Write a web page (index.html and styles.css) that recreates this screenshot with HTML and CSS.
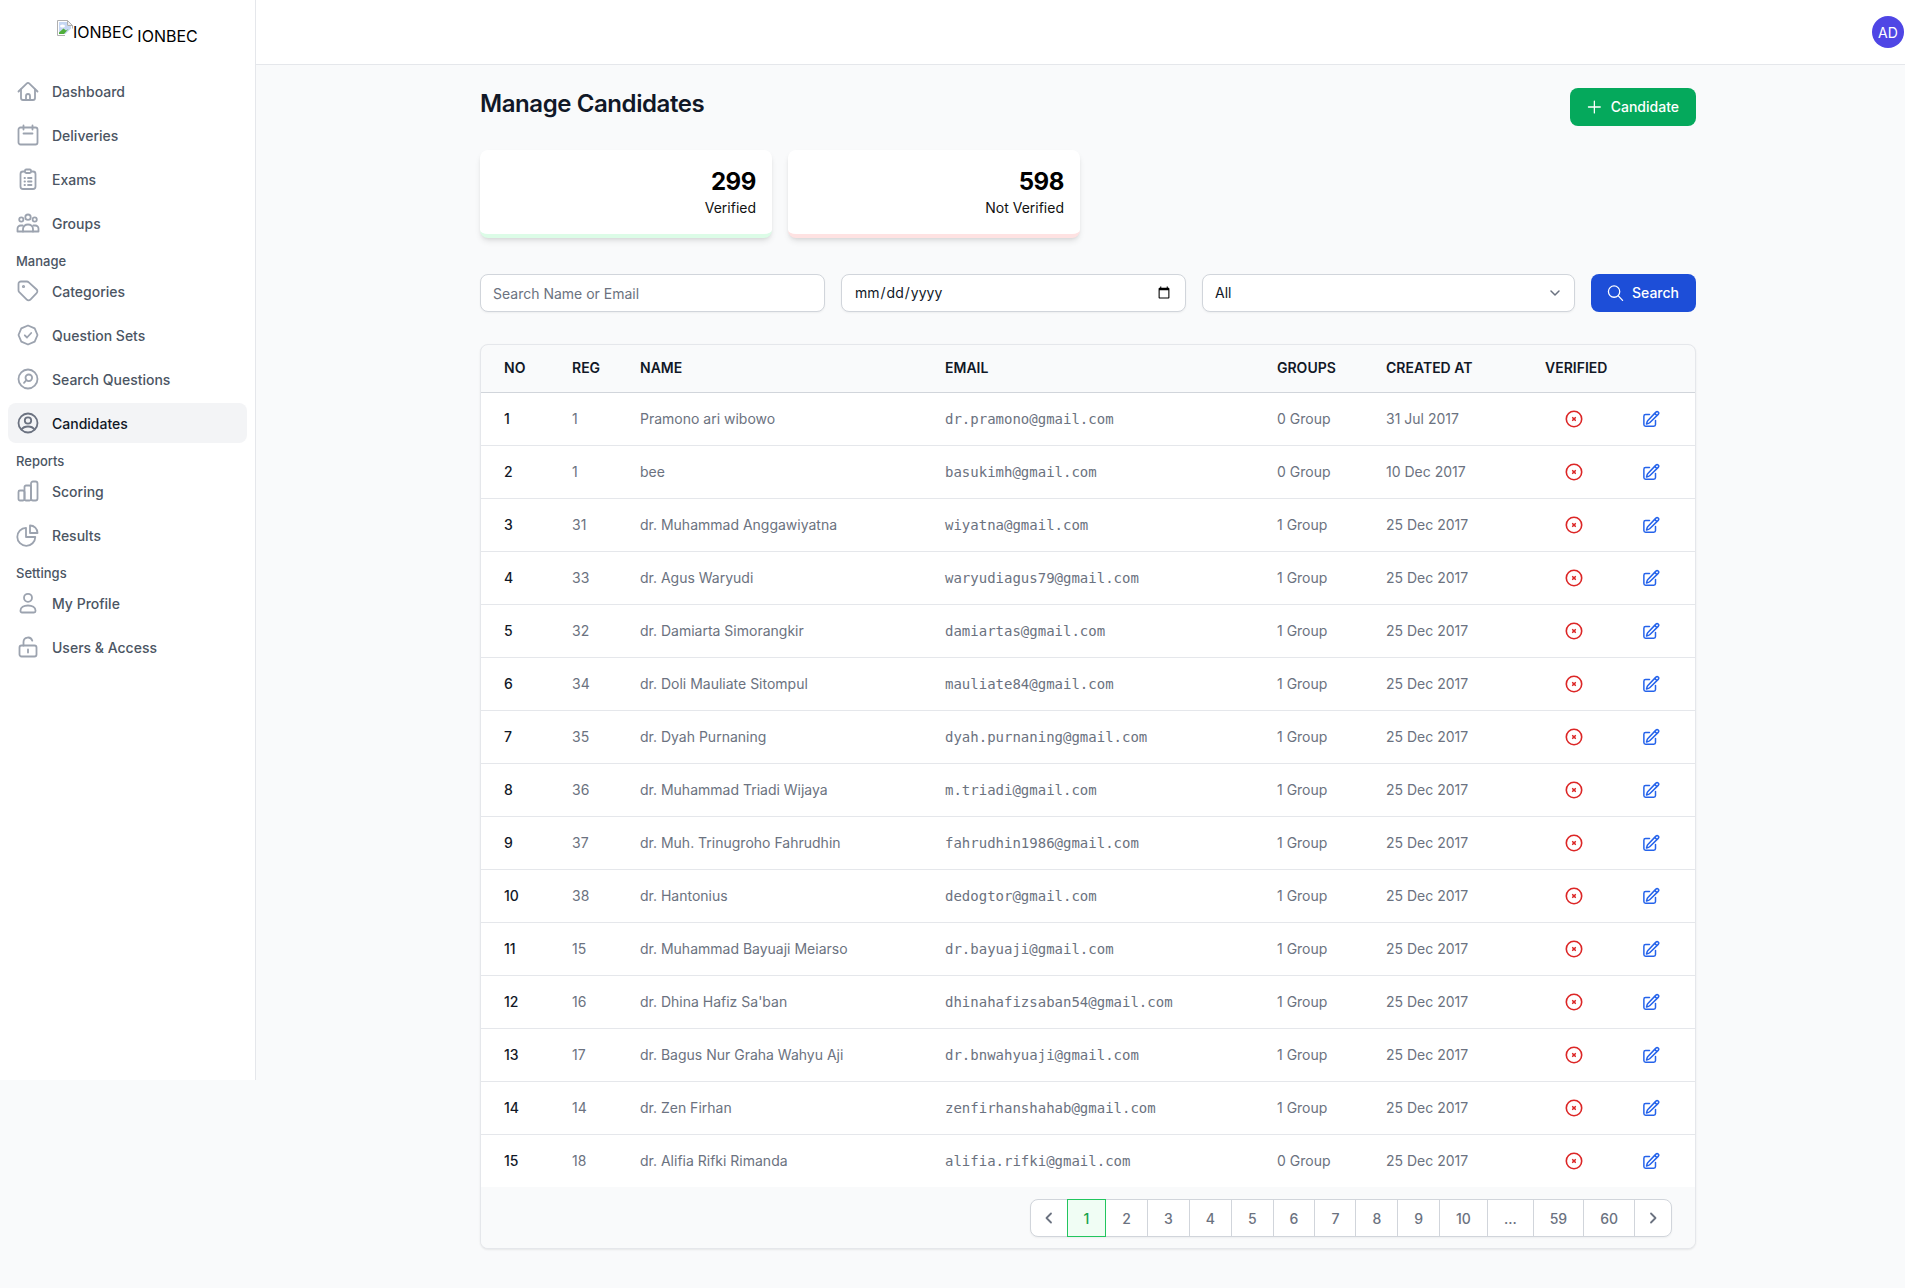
FILE: index.html
```html
<!DOCTYPE html>
<html lang="en">
<head>
<meta charset="utf-8">
<title>Manage Candidates</title>
<link rel="stylesheet" href="styles.css">
</head>
<body>
<div class="shell">
<aside class="sidebar">
  <div class="logo">
    <span class="logo-img">
      <svg class="broken" viewBox="0 0 16 16" width="16" height="16"><path d="M2 2h8v4h4v2.500L8.500 14H2z" fill="#c6d7f3"/><ellipse cx="5.500" cy="6" rx="2.500" ry="1.500" fill="#fff"/><path d="M2 14v-1.500l4.500-4 2.500 2 2.500-1.500L7 14z" fill="#4fae3a"/><path d="M8 15.500H.5V.5h10l5 5v3" fill="none" stroke="#b0b0b0"/><path d="M10.500.5v5h5z" fill="#eee" stroke="#b0b0b0"/></svg>
      <span class="logo-alt">IONBEC</span>
    </span>
    <span class="logo-text">IONBEC</span>
  </div>
  <nav class="nav">
    <a class="nav-item"><svg class="nav-icon" viewBox="0 0 24 24"><path d="M2.500 12.500 10.600 4.600a2 2 0 0 1 2.800 0l8.100 7.900"/><path d="M5 10.500V19a2 2 0 0 0 2 2h10a2 2 0 0 0 2-2v-8.500"/><path d="M10 21v-4a2 2 0 0 1 4 0v4"/></svg>Dashboard</a>
    <a class="nav-item"><svg class="nav-icon" viewBox="0 0 24 24"><rect x="2.500" y="4.500" width="19" height="17" rx="2"/><path d="M7.500 2.500v4M16.500 2.500v4M7.500 10.500h9"/></svg>Deliveries</a>
    <a class="nav-item"><svg class="nav-icon" viewBox="0 0 24 24"><rect x="4.500" y="4.500" width="15" height="17.500" rx="2.500"/><rect x="9" y="2.500" width="6" height="3.500" rx="1.200" fill="#fff"/><path d="M8.500 11h.5M12 11h3.500M8.500 14.500h.5M12 14.500h3.500M8.500 18h.5M12 18h3.500"/></svg>Exams</a>
    <a class="nav-item"><svg class="nav-icon" viewBox="0 0 24 24"><circle cx="12" cy="6.200" r="2.700"/><circle cx="5.300" cy="8.500" r="2.100"/><circle cx="18.700" cy="8.500" r="2.100"/><path d="M7 20.500v-2.500c0-2.700 2.200-4.500 5-4.500s5 1.800 5 4.500v2.500"/><path d="M1.500 20.500v-2.800a3.200 3.200 0 0 1 3.200-3.200h2M22.500 20.500v-2.800a3.200 3.200 0 0 0-3.200-3.200h-2M1.500 20.500h21"/></svg>Groups</a>
    <div class="nav-label">Manage</div>
    <a class="nav-item"><svg class="nav-icon" viewBox="0 0 24 24"><path d="M2.500 5a2.500 2.500 0 0 1 2.500-2.500h5.800a3 3 0 0 1 2 .8l7.800 7.200a2.500 2.500 0 0 1 0 3.600l-6.200 6.600a2.500 2.500 0 0 1-3.600 0l-7.500-7.500a3 3 0 0 1-.8-2z"/><circle cx="7.500" cy="7.500" r=".7"/></svg>Categories</a>
    <a class="nav-item"><svg class="nav-icon" viewBox="0 0 24 24"><path d="M12 2.500l6.700 2.800 2.800 6.700-2.800 6.700-6.700 2.800-6.700-2.800L2.500 12l2.800-6.700z"/><path d="M8.800 12.300l2.200 2.200 4.200-4.500"/></svg>Question Sets</a>
    <a class="nav-item"><svg class="nav-icon" viewBox="0 0 24 24"><circle cx="12" cy="12" r="9.500"/><circle cx="12.800" cy="10.800" r="3.300"/><path d="M10.400 13.200 8 15.800"/></svg>Search Questions</a>
    <a class="nav-item active"><svg class="nav-icon" viewBox="0 0 24 24"><circle cx="12" cy="12" r="9.500"/><circle cx="12" cy="9.500" r="3.200"/><path d="M5.500 18.500c1.300-2 3.700-3 6.500-3s5.200 1 6.500 3"/></svg>Candidates</a>
    <div class="nav-label">Reports</div>
    <a class="nav-item"><svg class="nav-icon" viewBox="0 0 24 24"><rect x="2.500" y="11.500" width="6" height="10" rx="1.500"/><rect x="8.500" y="6.500" width="6.500" height="15" rx="1.500"/><rect x="15" y="2.500" width="6.500" height="19" rx="2"/></svg>Scoring</a>
    <a class="nav-item"><svg class="nav-icon" viewBox="0 0 24 24"><path d="M10 4.800a9 9 0 1 0 9.300 9.200H10z"/><path d="M14 2.500a7.500 7.500 0 0 1 7.500 7.500H14z"/></svg>Results</a>
    <div class="nav-label">Settings</div>
    <a class="nav-item"><svg class="nav-icon" viewBox="0 0 24 24"><circle cx="12" cy="6.800" r="4"/><path d="M4.500 19.500c0-3 3.300-5 7.500-5s7.500 2 7.500 5v.5a1.500 1.500 0 0 1-1.500 1.500H6A1.500 1.500 0 0 1 4.500 20z"/></svg>My Profile</a>
    <a class="nav-item"><svg class="nav-icon" viewBox="0 0 24 24"><rect x="3.500" y="10.500" width="17" height="11" rx="2"/><path d="M7.500 10.500V7a4.500 4.500 0 0 1 8.800-1.300M12 14.500v3"/></svg>Users &amp; Access</a>
  </nav>
</aside>
<div class="main">
  <header class="topbar"><span class="avatar">AD</span></header>
  <main class="content">
    <div class="page-head">
      <h1 class="title">Manage Candidates</h1>
      <button class="btn btn-green"><svg class="btn-icon" viewBox="0 0 24 24"><path d="M12 3.500v17M3.500 12h17"/></svg>Candidate</button>
    </div>
    <div class="stats">
      <div class="stat stat-green"><div class="stat-num">299</div><div class="stat-label">Verified</div></div>
      <div class="stat stat-red"><div class="stat-num">598</div><div class="stat-label">Not Verified</div></div>
    </div>
    <form class="filters">
      <input class="field" type="text" placeholder="Search Name or Email">
      <input class="field" type="date">
      <select class="field select"><option>All</option></select>
      <button class="btn btn-blue" type="button"><svg class="btn-icon" viewBox="0 0 24 24"><circle cx="10" cy="10" r="8"/><path d="M16 16l6 6.500"/></svg>Search</button>
    </form>
    <div class="table-card">
      <table class="table">
        <colgroup><col class="c-no"><col class="c-reg"><col class="c-name"><col class="c-email"><col class="c-groups"><col class="c-created"><col class="c-verified"><col></colgroup>
        <thead><tr><th>No</th><th>Reg</th><th>Name</th><th>Email</th><th>Groups</th><th>Created At</th><th>Verified</th><th></th></tr></thead>
        <tbody>
          <tr><td class="num">1</td><td>1</td><td>Pramono ari wibowo</td><td class="mono">dr.pramono@gmail.com</td><td>0 Group</td><td>31 Jul 2017</td><td class="status"><svg class="x-icon" viewBox="0 0 20 20"><circle cx="10" cy="10" r="7.700"/><path d="M8.700 8.700l2.600 2.600M11.300 8.700l-2.600 2.600"/></svg></td><td class="action"><svg class="edit-icon" viewBox="0 0 24 24"><path d="M16.900 4.500l1.700-1.700a2.100 2.100 0 0 1 3 3L10.600 16.700a4.500 4.500 0 0 1-1.900 1.100L6 18.600l.8-2.700a4.500 4.500 0 0 1 1.100-1.900L16.900 4.500zM16.900 4.500l2.600 2.600M18 14v5.200a2.300 2.300 0 0 1-2.300 2.300H4.800a2.300 2.300 0 0 1-2.300-2.300V8.300A2.300 2.300 0 0 1 4.800 6H10"/></svg></td></tr>
          <tr><td class="num">2</td><td>1</td><td>bee</td><td class="mono">basukimh@gmail.com</td><td>0 Group</td><td>10 Dec 2017</td><td class="status"><svg class="x-icon" viewBox="0 0 20 20"><circle cx="10" cy="10" r="7.700"/><path d="M8.700 8.700l2.600 2.600M11.300 8.700l-2.600 2.600"/></svg></td><td class="action"><svg class="edit-icon" viewBox="0 0 24 24"><path d="M16.900 4.500l1.700-1.700a2.100 2.100 0 0 1 3 3L10.600 16.700a4.500 4.500 0 0 1-1.900 1.100L6 18.600l.8-2.700a4.500 4.500 0 0 1 1.100-1.900L16.900 4.500zM16.900 4.500l2.600 2.600M18 14v5.200a2.300 2.300 0 0 1-2.300 2.300H4.800a2.300 2.300 0 0 1-2.300-2.300V8.300A2.300 2.300 0 0 1 4.800 6H10"/></svg></td></tr>
          <tr><td class="num">3</td><td>31</td><td>dr. Muhammad Anggawiyatna</td><td class="mono">wiyatna@gmail.com</td><td>1 Group</td><td>25 Dec 2017</td><td class="status"><svg class="x-icon" viewBox="0 0 20 20"><circle cx="10" cy="10" r="7.700"/><path d="M8.700 8.700l2.600 2.600M11.300 8.700l-2.600 2.600"/></svg></td><td class="action"><svg class="edit-icon" viewBox="0 0 24 24"><path d="M16.900 4.500l1.700-1.700a2.100 2.100 0 0 1 3 3L10.600 16.700a4.500 4.500 0 0 1-1.900 1.100L6 18.600l.8-2.700a4.500 4.500 0 0 1 1.100-1.900L16.900 4.500zM16.900 4.500l2.600 2.600M18 14v5.200a2.300 2.300 0 0 1-2.300 2.300H4.800a2.300 2.300 0 0 1-2.300-2.300V8.300A2.300 2.300 0 0 1 4.800 6H10"/></svg></td></tr>
          <tr><td class="num">4</td><td>33</td><td>dr. Agus Waryudi</td><td class="mono">waryudiagus79@gmail.com</td><td>1 Group</td><td>25 Dec 2017</td><td class="status"><svg class="x-icon" viewBox="0 0 20 20"><circle cx="10" cy="10" r="7.700"/><path d="M8.700 8.700l2.600 2.600M11.300 8.700l-2.600 2.600"/></svg></td><td class="action"><svg class="edit-icon" viewBox="0 0 24 24"><path d="M16.900 4.500l1.700-1.700a2.100 2.100 0 0 1 3 3L10.600 16.700a4.500 4.500 0 0 1-1.900 1.100L6 18.600l.8-2.700a4.500 4.500 0 0 1 1.100-1.900L16.900 4.500zM16.900 4.500l2.600 2.600M18 14v5.200a2.300 2.300 0 0 1-2.300 2.300H4.800a2.300 2.300 0 0 1-2.300-2.300V8.300A2.300 2.300 0 0 1 4.800 6H10"/></svg></td></tr>
          <tr><td class="num">5</td><td>32</td><td>dr. Damiarta Simorangkir</td><td class="mono">damiartas@gmail.com</td><td>1 Group</td><td>25 Dec 2017</td><td class="status"><svg class="x-icon" viewBox="0 0 20 20"><circle cx="10" cy="10" r="7.700"/><path d="M8.700 8.700l2.600 2.600M11.300 8.700l-2.600 2.600"/></svg></td><td class="action"><svg class="edit-icon" viewBox="0 0 24 24"><path d="M16.900 4.500l1.700-1.700a2.100 2.100 0 0 1 3 3L10.600 16.700a4.500 4.500 0 0 1-1.900 1.100L6 18.600l.8-2.700a4.500 4.500 0 0 1 1.100-1.900L16.900 4.500zM16.900 4.500l2.600 2.600M18 14v5.200a2.300 2.300 0 0 1-2.300 2.300H4.800a2.300 2.300 0 0 1-2.300-2.300V8.300A2.300 2.300 0 0 1 4.800 6H10"/></svg></td></tr>
          <tr><td class="num">6</td><td>34</td><td>dr. Doli Mauliate Sitompul</td><td class="mono">mauliate84@gmail.com</td><td>1 Group</td><td>25 Dec 2017</td><td class="status"><svg class="x-icon" viewBox="0 0 20 20"><circle cx="10" cy="10" r="7.700"/><path d="M8.700 8.700l2.600 2.600M11.300 8.700l-2.600 2.600"/></svg></td><td class="action"><svg class="edit-icon" viewBox="0 0 24 24"><path d="M16.900 4.500l1.700-1.700a2.100 2.100 0 0 1 3 3L10.600 16.700a4.500 4.500 0 0 1-1.900 1.100L6 18.600l.8-2.700a4.500 4.500 0 0 1 1.100-1.900L16.900 4.500zM16.900 4.500l2.600 2.600M18 14v5.200a2.300 2.300 0 0 1-2.300 2.300H4.800a2.300 2.300 0 0 1-2.300-2.300V8.300A2.300 2.300 0 0 1 4.800 6H10"/></svg></td></tr>
          <tr><td class="num">7</td><td>35</td><td>dr. Dyah Purnaning</td><td class="mono">dyah.purnaning@gmail.com</td><td>1 Group</td><td>25 Dec 2017</td><td class="status"><svg class="x-icon" viewBox="0 0 20 20"><circle cx="10" cy="10" r="7.700"/><path d="M8.700 8.700l2.600 2.600M11.300 8.700l-2.600 2.600"/></svg></td><td class="action"><svg class="edit-icon" viewBox="0 0 24 24"><path d="M16.900 4.500l1.700-1.700a2.100 2.100 0 0 1 3 3L10.600 16.700a4.500 4.500 0 0 1-1.900 1.100L6 18.600l.8-2.700a4.500 4.500 0 0 1 1.100-1.900L16.900 4.500zM16.900 4.500l2.600 2.600M18 14v5.200a2.300 2.300 0 0 1-2.300 2.300H4.800a2.300 2.300 0 0 1-2.300-2.300V8.300A2.300 2.300 0 0 1 4.800 6H10"/></svg></td></tr>
          <tr><td class="num">8</td><td>36</td><td>dr. Muhammad Triadi Wijaya</td><td class="mono">m.triadi@gmail.com</td><td>1 Group</td><td>25 Dec 2017</td><td class="status"><svg class="x-icon" viewBox="0 0 20 20"><circle cx="10" cy="10" r="7.700"/><path d="M8.700 8.700l2.600 2.600M11.300 8.700l-2.600 2.600"/></svg></td><td class="action"><svg class="edit-icon" viewBox="0 0 24 24"><path d="M16.900 4.500l1.700-1.700a2.100 2.100 0 0 1 3 3L10.600 16.700a4.500 4.500 0 0 1-1.900 1.100L6 18.600l.8-2.700a4.500 4.500 0 0 1 1.100-1.900L16.900 4.500zM16.900 4.500l2.600 2.600M18 14v5.200a2.300 2.300 0 0 1-2.300 2.300H4.800a2.300 2.300 0 0 1-2.300-2.300V8.300A2.300 2.300 0 0 1 4.800 6H10"/></svg></td></tr>
          <tr><td class="num">9</td><td>37</td><td>dr. Muh. Trinugroho Fahrudhin</td><td class="mono">fahrudhin1986@gmail.com</td><td>1 Group</td><td>25 Dec 2017</td><td class="status"><svg class="x-icon" viewBox="0 0 20 20"><circle cx="10" cy="10" r="7.700"/><path d="M8.700 8.700l2.600 2.600M11.300 8.700l-2.600 2.600"/></svg></td><td class="action"><svg class="edit-icon" viewBox="0 0 24 24"><path d="M16.900 4.500l1.700-1.700a2.100 2.100 0 0 1 3 3L10.600 16.700a4.500 4.500 0 0 1-1.900 1.100L6 18.600l.8-2.700a4.500 4.500 0 0 1 1.100-1.900L16.900 4.500zM16.900 4.500l2.600 2.600M18 14v5.200a2.300 2.300 0 0 1-2.300 2.300H4.800a2.300 2.300 0 0 1-2.300-2.300V8.300A2.300 2.300 0 0 1 4.800 6H10"/></svg></td></tr>
          <tr><td class="num">10</td><td>38</td><td>dr. Hantonius</td><td class="mono">dedogtor@gmail.com</td><td>1 Group</td><td>25 Dec 2017</td><td class="status"><svg class="x-icon" viewBox="0 0 20 20"><circle cx="10" cy="10" r="7.700"/><path d="M8.700 8.700l2.600 2.600M11.300 8.700l-2.600 2.600"/></svg></td><td class="action"><svg class="edit-icon" viewBox="0 0 24 24"><path d="M16.900 4.500l1.700-1.700a2.100 2.100 0 0 1 3 3L10.600 16.700a4.500 4.500 0 0 1-1.900 1.100L6 18.600l.8-2.700a4.500 4.500 0 0 1 1.100-1.900L16.900 4.500zM16.900 4.500l2.600 2.600M18 14v5.200a2.300 2.300 0 0 1-2.300 2.300H4.800a2.300 2.300 0 0 1-2.300-2.300V8.300A2.300 2.300 0 0 1 4.800 6H10"/></svg></td></tr>
          <tr><td class="num">11</td><td>15</td><td>dr. Muhammad Bayuaji Meiarso</td><td class="mono">dr.bayuaji@gmail.com</td><td>1 Group</td><td>25 Dec 2017</td><td class="status"><svg class="x-icon" viewBox="0 0 20 20"><circle cx="10" cy="10" r="7.700"/><path d="M8.700 8.700l2.600 2.600M11.300 8.700l-2.600 2.600"/></svg></td><td class="action"><svg class="edit-icon" viewBox="0 0 24 24"><path d="M16.900 4.500l1.700-1.700a2.100 2.100 0 0 1 3 3L10.600 16.700a4.500 4.500 0 0 1-1.900 1.100L6 18.600l.8-2.700a4.500 4.500 0 0 1 1.100-1.900L16.900 4.500zM16.900 4.500l2.600 2.600M18 14v5.200a2.300 2.300 0 0 1-2.300 2.300H4.800a2.300 2.300 0 0 1-2.300-2.300V8.300A2.300 2.300 0 0 1 4.800 6H10"/></svg></td></tr>
          <tr><td class="num">12</td><td>16</td><td>dr. Dhina Hafiz Sa'ban</td><td class="mono">dhinahafizsaban54@gmail.com</td><td>1 Group</td><td>25 Dec 2017</td><td class="status"><svg class="x-icon" viewBox="0 0 20 20"><circle cx="10" cy="10" r="7.700"/><path d="M8.700 8.700l2.600 2.600M11.300 8.700l-2.600 2.600"/></svg></td><td class="action"><svg class="edit-icon" viewBox="0 0 24 24"><path d="M16.900 4.500l1.700-1.700a2.100 2.100 0 0 1 3 3L10.600 16.700a4.500 4.500 0 0 1-1.900 1.100L6 18.600l.8-2.700a4.500 4.500 0 0 1 1.100-1.900L16.900 4.500zM16.900 4.500l2.600 2.600M18 14v5.200a2.300 2.300 0 0 1-2.300 2.300H4.800a2.300 2.300 0 0 1-2.300-2.300V8.300A2.300 2.300 0 0 1 4.800 6H10"/></svg></td></tr>
          <tr><td class="num">13</td><td>17</td><td>dr. Bagus Nur Graha Wahyu Aji</td><td class="mono">dr.bnwahyuaji@gmail.com</td><td>1 Group</td><td>25 Dec 2017</td><td class="status"><svg class="x-icon" viewBox="0 0 20 20"><circle cx="10" cy="10" r="7.700"/><path d="M8.700 8.700l2.600 2.600M11.300 8.700l-2.600 2.600"/></svg></td><td class="action"><svg class="edit-icon" viewBox="0 0 24 24"><path d="M16.900 4.500l1.700-1.700a2.100 2.100 0 0 1 3 3L10.600 16.700a4.500 4.500 0 0 1-1.900 1.100L6 18.600l.8-2.700a4.500 4.500 0 0 1 1.100-1.900L16.900 4.500zM16.900 4.500l2.600 2.600M18 14v5.200a2.300 2.300 0 0 1-2.300 2.300H4.800a2.300 2.300 0 0 1-2.300-2.300V8.300A2.300 2.300 0 0 1 4.800 6H10"/></svg></td></tr>
          <tr><td class="num">14</td><td>14</td><td>dr. Zen Firhan</td><td class="mono">zenfirhanshahab@gmail.com</td><td>1 Group</td><td>25 Dec 2017</td><td class="status"><svg class="x-icon" viewBox="0 0 20 20"><circle cx="10" cy="10" r="7.700"/><path d="M8.700 8.700l2.600 2.600M11.300 8.700l-2.600 2.600"/></svg></td><td class="action"><svg class="edit-icon" viewBox="0 0 24 24"><path d="M16.900 4.500l1.700-1.700a2.100 2.100 0 0 1 3 3L10.600 16.700a4.500 4.500 0 0 1-1.900 1.100L6 18.600l.8-2.700a4.500 4.500 0 0 1 1.100-1.900L16.900 4.500zM16.900 4.500l2.600 2.600M18 14v5.200a2.300 2.300 0 0 1-2.300 2.300H4.800a2.300 2.300 0 0 1-2.300-2.300V8.300A2.300 2.300 0 0 1 4.800 6H10"/></svg></td></tr>
          <tr><td class="num">15</td><td>18</td><td>dr. Alifia Rifki Rimanda</td><td class="mono">alifia.rifki@gmail.com</td><td>0 Group</td><td>25 Dec 2017</td><td class="status"><svg class="x-icon" viewBox="0 0 20 20"><circle cx="10" cy="10" r="7.700"/><path d="M8.700 8.700l2.600 2.600M11.300 8.700l-2.600 2.600"/></svg></td><td class="action"><svg class="edit-icon" viewBox="0 0 24 24"><path d="M16.900 4.500l1.700-1.700a2.100 2.100 0 0 1 3 3L10.600 16.700a4.500 4.500 0 0 1-1.900 1.100L6 18.600l.8-2.700a4.500 4.500 0 0 1 1.100-1.900L16.900 4.500zM16.900 4.500l2.600 2.600M18 14v5.200a2.300 2.300 0 0 1-2.300 2.300H4.800a2.300 2.300 0 0 1-2.300-2.300V8.300A2.300 2.300 0 0 1 4.800 6H10"/></svg></td></tr>
        </tbody>
      </table>
      <div class="pager-bar">
        <div class="pager">
          <a class="page page-arrow"><svg class="chev" viewBox="0 0 20 20"><path d="M12 5.500 7.500 10l4.500 4.500"/></svg></a>
          <a class="page current">1</a>
          <a class="page">2</a><a class="page">3</a><a class="page">4</a><a class="page">5</a><a class="page">6</a><a class="page">7</a><a class="page">8</a><a class="page">9</a><a class="page">10</a><a class="page">...</a><a class="page">59</a><a class="page">60</a>
          <a class="page page-arrow"><svg class="chev" viewBox="0 0 20 20"><path d="M8 5.500 12.500 10 8 14.500"/></svg></a>
        </div>
      </div>
    </div>
  </main>
</div>
</div>
</body>
</html>
```
FILE: styles.css
```css
* { box-sizing: border-box; }
html, body { margin: 0; padding: 0; }
body {
  background: #f9fafb;
  font-family: Inter, "Liberation Sans", sans-serif;
  font-size: 14px;
  color: #111827;
  overflow-x: hidden;
}
.shell { display: flex; width: 1920px; align-items: flex-start; }

/* sidebar */
.sidebar {
  width: 256px;
  height: 1080px;
  flex: none;
  background: #fff;
  border-right: 1px solid #e5e7eb;
}
.logo { height: 71px; padding: 20px 0 0 57px; display: flex; align-items: flex-start; font-size: 16px; line-height: 20px; color: #000; }
.logo-img { display: flex; align-items: flex-start; }
.broken { flex: none; }
.logo-alt { margin-top: 2px; }
.logo-text { margin: 6px 0 0 4px; }
.nav { display: flex; flex-direction: column; gap: 4px; padding: 0 8px; }
.nav-item {
  height: 40px;
  display: flex;
  align-items: center;
  gap: 12px;
  padding: 0 8px;
  border-radius: 8px;
  font-weight: 500;
  color: #4b5563;
}
.nav-item.active { background: #f3f4f6; color: #111827; }
.nav-icon { width: 24px; height: 24px; flex: none; fill: none; stroke: #9ca3af; stroke-width: 1.8; stroke-linecap: round; stroke-linejoin: round; }
.active .nav-icon { stroke: #6b7280; }
.nav-label { height: 20px; line-height: 20px; margin-top: 4px; margin-bottom: -4px; padding-left: 8px; font-size: 13px; font-weight: 500; color: #4b5563; }

/* main */
.main { flex: 1; min-width: 0; }
.topbar { height: 65px; background: #fff; border-bottom: 1px solid #e5e7eb; display: flex; align-items: center; justify-content: flex-end; padding-right: 16px; }
.avatar { width: 32px; height: 32px; border-radius: 50%; background: #4f46e5; color: #fff; font-size: 14px; display: flex; align-items: center; justify-content: center; }
.content { width: 1216px; margin: 0 auto; padding: 23px 0 39px; }
.page-head { display: flex; justify-content: space-between; align-items: flex-start; height: 62px; }
.title { margin: 0; font-size: 24px; line-height: 32px; font-weight: 600; letter-spacing: -0.42px; color: #111827; }
.btn { height: 38px; padding: 0 17px 0 16px; border: 0; border-radius: 8px; color: #fff; font: 500 14px/20px Inter, "Liberation Sans", sans-serif; display: inline-flex; align-items: center; justify-content: flex-end; gap: 8px; }
.btn-green { width: 126px; background: #05a95c; }
.btn-blue { background: #1d4ed8; }
.btn-icon { width: 20px; height: 20px; fill: none; stroke: #fff; stroke-width: 1.8; stroke-linecap: round; }

.stats { display: flex; gap: 16px; }
.stat { width: 292px; height: 88px; padding: 16px; background: #fff; border-radius: 8px; text-align: right; box-shadow: 0 4px 6px -1px rgba(0,0,0,.1), 0 2px 4px -2px rgba(0,0,0,.1); }
.stat-green { border-bottom: 4px solid #dcfce7; }
.stat-red { border-bottom: 4px solid #fee2e2; }
.stat-num { font-size: 24px; line-height: 32px; font-weight: 700; letter-spacing: -0.4px; color: #000; }
.stat-label { font-size: 14px; line-height: 20px; font-weight: 400; color: #111; }

.filters { display: grid; grid-template-columns: 345px 345px 1fr 105px; gap: 16px; margin-top: 36px; }
.field { height: 38px; width: 100%; padding: 0 12px; background-color: #fff; border: 1px solid #d1d5db; border-radius: 8px; font: 400 14px/20px Inter, "Liberation Sans", sans-serif; color: #111827; box-shadow: 0 1px 2px rgba(0,0,0,.05); }
.field::placeholder { color: #6b7280; opacity: 1; }
.select { appearance: none; background-image: url("data:image/svg+xml,%3Csvg xmlns='http://www.w3.org/2000/svg' viewBox='0 0 20 20'%3E%3Cpath d='M6 8l4 4 4-4' fill='none' stroke='%236b7280' stroke-width='1.500' stroke-linecap='round' stroke-linejoin='round'/%3E%3C/svg%3E"); background-repeat: no-repeat; background-position: right 9px center; background-size: 20px 20px; }

.table-card { margin-top: 32px; background: #f9fafb; border: 1px solid #e5e7eb; border-radius: 8px; box-shadow: 0 1px 2px rgba(0,0,0,.08); overflow: hidden; }
.table { width: 100%; border-collapse: collapse; table-layout: fixed; }
.c-no { width: 67px; }
.c-reg { width: 68px; }
.c-name { width: 305px; }
.c-email { width: 332px; }
.c-groups { width: 109px; }
.c-created { width: 159px; }
.c-verified { width: 110px; }
.table th { height: 47px; padding: 0 0 2px 24px; text-align: left; font-size: 14px; font-weight: 600; text-transform: uppercase; color: #111827; border-bottom: 1px solid #d1d5db; white-space: nowrap; }
.table th:first-child { padding-left: 23px; }
.table td { height: 53px; padding: 0 0 0 24px; background: #fff; color: #6b7280; border-bottom: 1px solid #e5e7eb; white-space: nowrap; }
.table tr:last-child td { height: 53px; border-bottom: 0; }
.table td.num { padding-left: 23px; font-weight: 500; color: #111827; }
.table td.mono { font-family: "DejaVu Sans Mono", "Liberation Mono", monospace; }
.table td.status { padding-left: 43px; }
.table td.action { padding-left: 11px; }
.x-icon { display: block; width: 20px; height: 20px; fill: none; stroke: #dc2626; stroke-width: 1.6; stroke-linecap: round; }
.edit-icon { display: block; width: 18px; height: 18px; fill: none; stroke: #2563eb; stroke-width: 2; stroke-linecap: round; stroke-linejoin: round; }

.pager-bar { height: 61px; padding: 12px 23px 0 0; display: flex; justify-content: flex-end; background: #f9fafb; }
.pager { height: 38px; display: flex; background: #fff; border: 1px solid #d1d5db; border-radius: 8px; box-shadow: 0 1px 2px rgba(0,0,0,.05); }
.page { display: flex; align-items: center; padding: 0 16px; border-left: 1px solid #d1d5db; font-weight: 500; color: #6b7280; }
.page:first-child { border-left: 0; }
.page-arrow { padding: 0 8px; }
.page.current { margin: -1px 0; border: 1px solid #22c55e; background: #f0fdf4; color: #16a34a; }
.page.current + .page { border-left: 0; }
.chev { width: 20px; height: 20px; fill: none; stroke: #6b7280; stroke-width: 1.8; stroke-linecap: round; stroke-linejoin: round; }
```
